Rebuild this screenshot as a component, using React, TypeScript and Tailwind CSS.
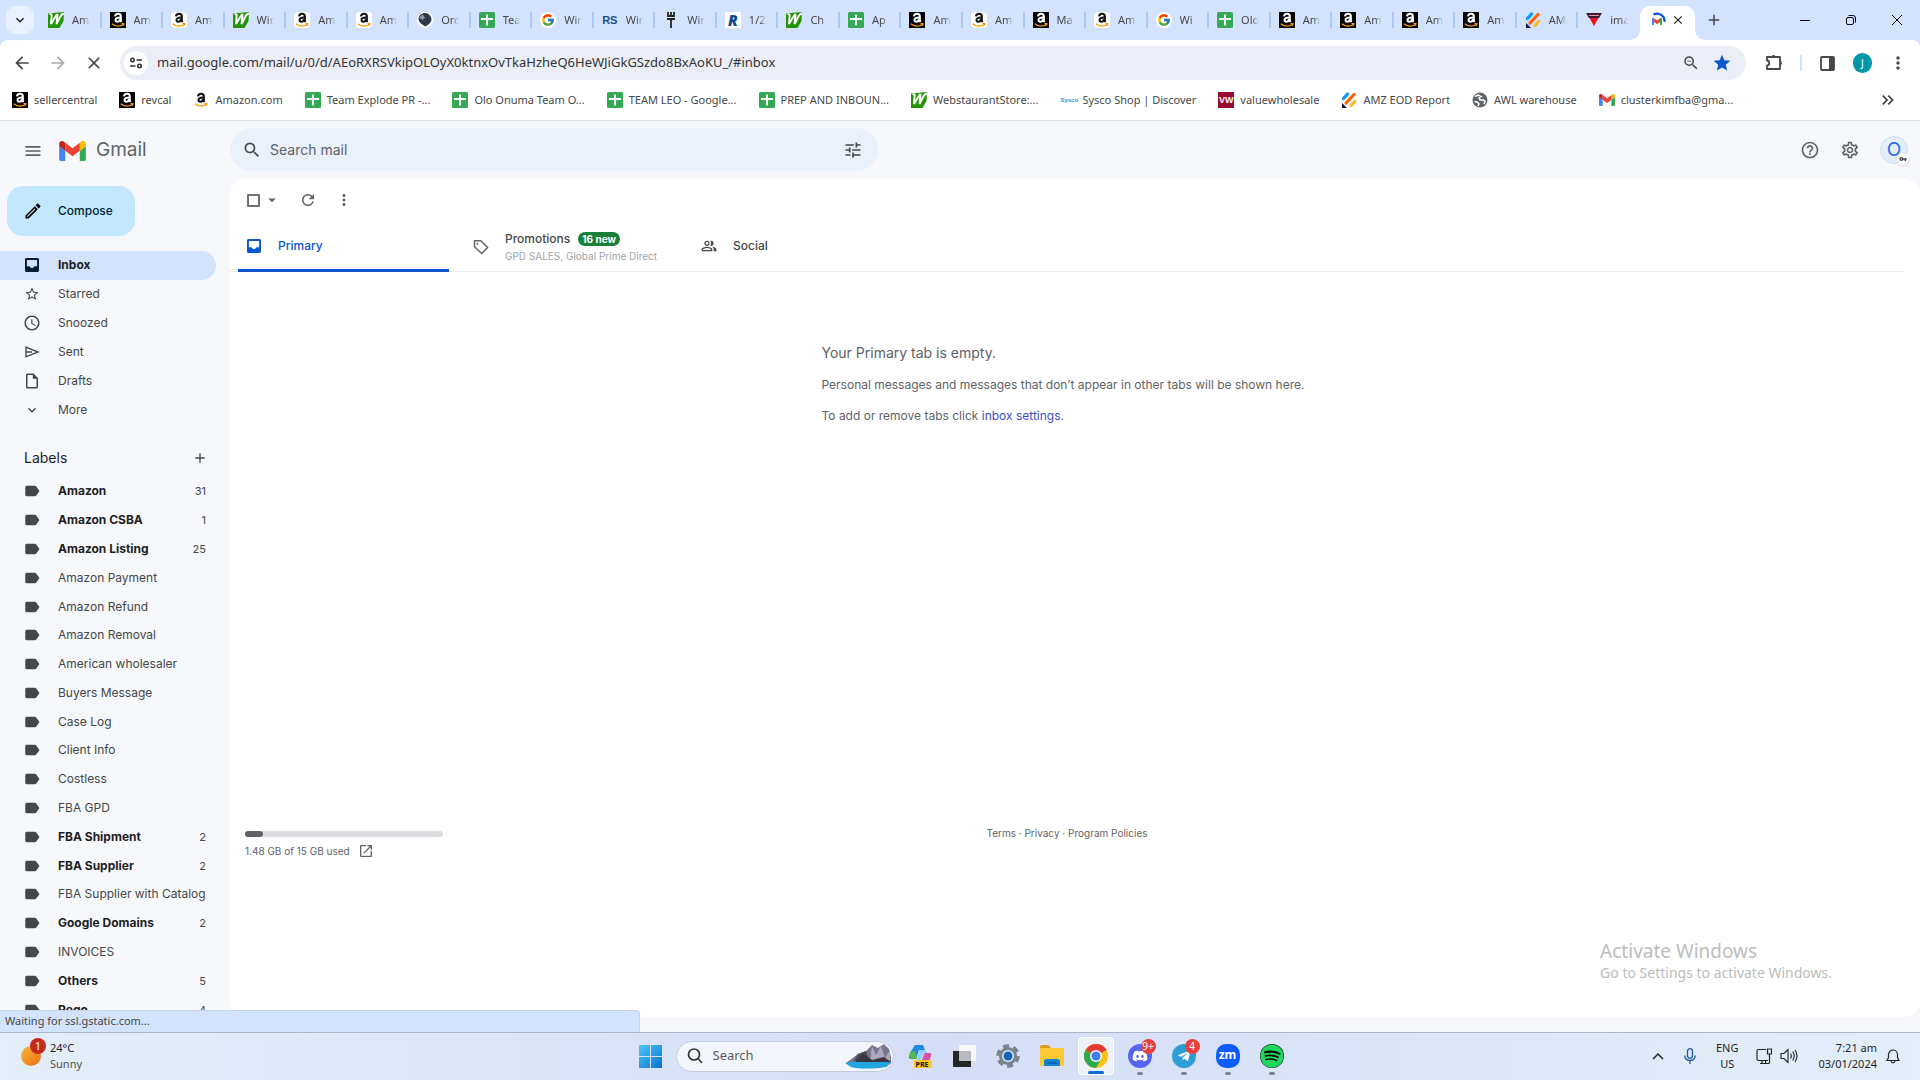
import { ReactNode } from 'react'
import {
  MdAccessTime,
  MdAdd,
  MdArrowBack,
  MdArrowDropDown,
  MdArrowForward,
  MdClose,
  MdExpandMore,
  MdHelpOutline,
  MdKeyboardDoubleArrowRight,
  MdLabel,
  MdMenu,
  MdMoreVert,
  MdOpenInNew,
  MdOutlineInsertDriveFile,
  MdOutlineModeEdit,
  MdOutlinePeopleAlt,
  MdOutlineSettings,
  MdRefresh,
  MdSearch,
  MdStar,
  MdStarOutline,
  MdTune,
  MdVpnKey,
  MdZoomOut,
} from 'react-icons/md'
import { FaDiscord, FaSpotify, FaTelegramPlane } from 'react-icons/fa'
import { FcGoogle } from 'react-icons/fc'

type IconName =
  | 'webstaurant'
  | 'amazonDark'
  | 'amazonLight'
  | 'amazonPlain'
  | 'globe'
  | 'darkGlobe'
  | 'sheets'
  | 'google'
  | 'rs'
  | 'fork'
  | 'r'
  | 'sysco'
  | 'vw'
  | 'jot'
  | 'triangle'
  | 'gmail'

function AmazonMark({ color }: { color: string }) {
  return (
    <svg viewBox="0 0 16 16" className="size-4">
      <path
        d="M5 4.400C5.200 2.600 6.500 1.800 8.100 1.800c1.800 0 2.700.9 2.700 2.500v4c0 .8.300 1.200.8 1.700"
        fill="none"
        stroke={color}
        strokeWidth="2.100"
      />
      <path
        d="M10 5.500C7 5.500 5.500 6.300 5.500 8c0 1.100.7 1.700 1.800 1.700 1.600 0 2.700-1 2.700-2.600"
        fill="none"
        stroke={color}
        strokeWidth="2"
      />
      <path
        d="M1.800 11.800c3.400 2.700 8.200 2.900 11.700.7M11.500 11.600l2.300.1-.4 2"
        fill="none"
        stroke="#f90"
        strokeWidth="1.400"
      />
    </svg>
  )
}

function GmailMark({ className }: { className: string }) {
  return (
    <svg viewBox="52 42 88 66" className={className}>
      <path fill="#4285f4" d="M58 108h14V74L52 59v43c0 3.320 2.690 6 6 6" />
      <path fill="#34a853" d="M120 108h14c3.320 0 6-2.690 6-6V59l-20 15" />
      <path fill="#fbbc04" d="M120 48v26l20-15v-8c0-7.420-8.470-11.650-14.400-7.200" />
      <path fill="#ea4335" d="M72 74V48l24 18 24-18v26L96 92" />
      <path fill="#c5221f" d="M52 51v8l20 15V48l-5.600-4.200c-5.940-4.450-14.400-.22-14.400 7.200" />
    </svg>
  )
}

function InboxIcon({ className }: { className: string }) {
  return (
    <svg viewBox="0 0 16 16" className={className}>
      <path
        d="M2.500 1h11c.8 0 1.500.7 1.500 1.500v11c0 .8-.7 1.500-1.500 1.500h-11C1.700 15 1 14.300 1 13.500v-11C1 1.700 1.700 1 2.500 1zm.4 1.900v6.400h2.800c.3 1.100 1.200 1.800 2.300 1.800s2-.7 2.300-1.800h2.800V2.900z"
        fill="currentColor"
        fillRule="evenodd"
      />
    </svg>
  )
}

function SiteIcon({ name }: { name: IconName }) {
  switch (name) {
    case 'webstaurant':
      return (
        <svg viewBox="0 0 16 16" className="size-4 shrink-0">
          <path d="M0 1.500L16 0l-.5 9-4 7H0z" fill="#249406" />
          <path
            d="M1.500 2.500c2-1 2.500 0 2 3L3 12l5.500-9c.6-1 1.200-.6 1 .5L8.500 12 13 3.500c.6-1.200 1.500-1.500 3-2"
            fill="none"
            stroke="#fff"
            strokeWidth="1.900"
          />
        </svg>
      )
    case 'amazonDark':
      return (
        <span className="size-4 shrink-0 bg-black">
          <AmazonMark color="#fff" />
        </span>
      )
    case 'amazonLight':
      return (
        <span className="size-4 shrink-0 rounded-sm bg-white">
          <AmazonMark color="#111" />
        </span>
      )
    case 'amazonPlain':
      return (
        <span className="size-4 shrink-0">
          <AmazonMark color="#111" />
        </span>
      )
    case 'sheets':
      return (
        <svg viewBox="0 0 16 16" className="size-4 shrink-0">
          <rect width="16" height="16" rx="1.500" fill="#34a853" />
          <path d="M7 2.500h2V6h5v2H9v5.500H7V8H2V6h5z" fill="#fff" />
        </svg>
      )
    case 'google':
      return (
        <span className="size-4 shrink-0 rounded-full bg-white p-px">
          <FcGoogle className="size-3.5" />
        </span>
      )
    case 'darkGlobe':
      return (
        <svg viewBox="0 0 16 16" className="size-4 shrink-0">
          <circle cx="8" cy="8" r="8" fill="#fff" />
          <path
            d="M8 1a6.500 6.500 0 0 1 6.500 6.500c0 3-3 5-6 7-2.500-1.500-7-4-7-7.500C1.500 3.500 4.500 1 8 1z"
            fill="#2b3a45"
          />
          <path
            d="M2 6c1-2 2.500-3 4.500-3.500C6 4 7 5 8.500 5.500 7 6 6 7 6 8.500 5 7 3.500 6.500 2 6z"
            fill="#8f9ca5"
          />
        </svg>
      )
    case 'globe':
      return (
        <svg viewBox="0 0 16 16" className="size-4 shrink-0">
          <circle cx="8" cy="8" r="7.500" fill="#5f6368" />
          <path
            d="M3 4.500L6 3l3 1.500-2 1 1 2.500h3.500l1.500 1.500-1 2.500M2.500 9.500l2.500.5 2 2-1 2"
            fill="none"
            stroke="#fff"
            strokeWidth="1.500"
          />
        </svg>
      )
    case 'rs':
      return (
        <span className="w-4 shrink-0 font-['Liberation_Sans'] text-[11px]/4 font-bold text-[#1c4f8c]">
          RS
        </span>
      )
    case 'fork':
      return (
        <svg viewBox="0 0 16 16" className="size-4 shrink-0">
          <path
            d="M5 0v4h6V0M8 0v4M4 7h8M8 7v9"
            fill="none"
            stroke="#222"
            strokeWidth="1.800"
          />
        </svg>
      )
    case 'r':
      return (
        <span className="size-4 shrink-0 bg-white text-center text-[15px]/4 font-black text-[#0b4a8f] italic">
          R
        </span>
      )
    case 'sysco':
      return (
        <span className="w-4 shrink-0 font-['Liberation_Sans'] text-[6px]/4 font-black text-[#1c95d4]">
          Sysco
        </span>
      )
    case 'vw':
      return (
        <span className="size-4 shrink-0 bg-[#9b0a32] text-center font-['Liberation_Sans'] text-[9px]/4 font-bold text-white">
          VW
        </span>
      )
    case 'jot':
      return (
        <svg viewBox="0 0 16 16" className="size-4 shrink-0">
          <g strokeWidth="3.200" strokeLinecap="round">
            <path d="M2.500 6.500l4-4.500" stroke="#0a99ff" />
            <path d="M5 11l8-8.500" stroke="#ff6100" />
            <path d="M10 13.500l3.800-4" stroke="#ffb629" />
          </g>
          <path d="M1 11v5h5z" fill="#0a1551" />
        </svg>
      )
    case 'triangle':
      return (
        <svg viewBox="0 0 16 16" className="size-4 shrink-0">
          <path d="M0 1h16l-3 5H3z" fill="#3c1a3c" />
          <path d="M3.500 6h9L8 14z" fill="#f0141e" />
          <path d="M3 3.500h10" stroke="#e09aa0" />
        </svg>
      )
    case 'gmail':
      return <GmailMark className="h-3 w-4 shrink-0" />
  }
}

const tabs: { icon: IconName; title: string }[] = [
  { icon: 'webstaurant', title: 'Am' },
  { icon: 'amazonDark', title: 'Am' },
  { icon: 'amazonLight', title: 'Am' },
  { icon: 'webstaurant', title: 'Win' },
  { icon: 'amazonLight', title: 'Am' },
  { icon: 'amazonLight', title: 'Am' },
  { icon: 'darkGlobe', title: 'Ord' },
  { icon: 'sheets', title: 'Tea' },
  { icon: 'google', title: 'Win' },
  { icon: 'rs', title: 'Win' },
  { icon: 'fork', title: 'Win' },
  { icon: 'r', title: '1/2' },
  { icon: 'webstaurant', title: 'Ch' },
  { icon: 'sheets', title: 'Ap' },
  { icon: 'amazonDark', title: 'Am' },
  { icon: 'amazonLight', title: 'Am' },
  { icon: 'amazonDark', title: 'Ma' },
  { icon: 'amazonLight', title: 'Am' },
  { icon: 'google', title: 'Wi' },
  { icon: 'sheets', title: 'Olo' },
  { icon: 'amazonDark', title: 'Am' },
  { icon: 'amazonDark', title: 'Am' },
  { icon: 'amazonDark', title: 'Am' },
  { icon: 'amazonDark', title: 'Am' },
  { icon: 'jot', title: 'AM' },
  { icon: 'triangle', title: 'ima' },
]

const bookmarks: { icon: IconName; title: string }[] = [
  { icon: 'amazonDark', title: 'sellercentral' },
  { icon: 'amazonDark', title: 'revcal' },
  { icon: 'amazonPlain', title: 'Amazon.com' },
  { icon: 'sheets', title: 'Team Explode PR -...' },
  { icon: 'sheets', title: 'Olo Onuma Team O...' },
  { icon: 'sheets', title: 'TEAM LEO - Google...' },
  { icon: 'sheets', title: 'PREP AND INBOUN...' },
  { icon: 'webstaurant', title: 'WebstaurantStore:...' },
  { icon: 'sysco', title: 'Sysco Shop | Discover' },
  { icon: 'vw', title: 'valuewholesale' },
  { icon: 'jot', title: 'AMZ EOD Report' },
  { icon: 'globe', title: 'AWL warehouse' },
  { icon: 'gmail', title: 'clusterkimfba@gma...' },
]

const labels: { name: string; count?: number }[] = [
  { name: 'Amazon', count: 31 },
  { name: 'Amazon CSBA', count: 1 },
  { name: 'Amazon Listing', count: 25 },
  { name: 'Amazon Payment' },
  { name: 'Amazon Refund' },
  { name: 'Amazon Removal' },
  { name: 'American wholesaler' },
  { name: 'Buyers Message' },
  { name: 'Case Log' },
  { name: 'Client Info' },
  { name: 'Costless' },
  { name: 'FBA GPD' },
  { name: 'FBA Shipment', count: 2 },
  { name: 'FBA Supplier', count: 2 },
  { name: 'FBA Supplier with Catalog' },
  { name: 'Google Domains', count: 2 },
  { name: 'INVOICES' },
  { name: 'Others', count: 5 },
  { name: 'Rego', count: 4 },
]

function TabStrip() {
  return (
    <div className="flex h-10 bg-[#d3e3fd]">
      <div className="w-10 shrink-0 pt-1.5 pl-1.5">
        <button
          aria-label="Search tabs"
          className="flex size-7 items-center justify-center rounded-[10px] bg-[#e9f1fe]"
        >
          <MdExpandMore className="size-4 text-[#1f1f1f]" />
        </button>
      </div>
      <div className="flex min-w-0 flex-1">
        {tabs.map((tab, i) => (
          <button key={i} className="flex min-w-0 flex-1 items-center pl-2">
            <SiteIcon name={tab.icon} />
            <span className="ml-2 min-w-0 flex-1 overflow-hidden mask-r-from-60% text-left text-[11px]/4 whitespace-nowrap text-[#474747]">
              {tab.title}
            </span>
            <span
              className={
                i === tabs.length - 1
                  ? 'ml-2.5 w-0.5 shrink-0'
                  : 'ml-2.5 h-4 w-0.5 shrink-0 bg-[#a8c7fa]'
              }
            />
          </button>
        ))}
      </div>
      <div className="relative mt-1.5 flex w-[55px] shrink-0 items-center justify-between rounded-t-[10px] bg-white px-2.5 pb-1.5">
        <svg
          viewBox="0 0 10 10"
          className="absolute bottom-0 -left-2.5 size-2.5"
        >
          <path d="M10 0v10H0A10 10 0 0 0 10 0z" fill="#fff" />
        </svg>
        <svg
          viewBox="0 0 10 10"
          className="absolute -right-2.5 bottom-0 size-2.5"
        >
          <path d="M0 0v10h10A10 10 0 0 1 0 0z" fill="#fff" />
        </svg>
        <svg viewBox="0 0 16 16" className="size-4">
          <path
            d="M3 6l4 3 4-3v3L7 11.500 3 9z"
            fill="#ea4335"
            stroke="#ea4335"
          />
          <path d="M3 6.500V13" stroke="#4285f4" strokeWidth="2" />
          <path d="M11 6.500V13" stroke="#34a853" strokeWidth="2" />
          <path
            d="M3.500 2.500A7.500 7.500 0 0 1 14.500 10"
            fill="none"
            stroke="#0b57d0"
            strokeWidth="2.200"
          />
        </svg>
        <button aria-label="Close tab">
          <MdClose className="size-3.5 text-[#1f1f1f]" />
        </button>
      </div>
      <div className="flex w-[225px] shrink-0 items-center justify-between pr-[18px] pl-2.5">
        <button aria-label="New tab">
          <MdAdd className="size-[18px] text-[#474747]" />
        </button>
        <div className="flex items-center gap-9">
          <button aria-label="Minimize">
            <svg viewBox="0 0 10 10" className="size-2.5">
              <path d="M0 5.500h10" stroke="#000" />
            </svg>
          </button>
          <button aria-label="Restore">
            <svg viewBox="0 0 10 10" className="size-2.5">
              <g fill="none" stroke="#000">
                <rect x=".5" y="2.500" width="7" height="7" rx="1.500" />
                <path d="M2.500.5H7A2.500 2.500 0 0 1 9.500 3v4.500" />
              </g>
            </svg>
          </button>
          <button aria-label="Close">
            <svg viewBox="0 0 10 10" className="size-2.5">
              <path d="M0 0l10 10M10 0L0 10" stroke="#000" />
            </svg>
          </button>
        </div>
      </div>
    </div>
  )
}

function AddressBar() {
  return (
    <div className="flex h-[46px] items-center rounded-t-lg bg-white pr-3 pl-3">
      <div className="flex w-[108px] shrink-0 items-center gap-4">
        <button aria-label="Back">
          <MdArrowBack className="size-5 text-[#474747]" />
        </button>
        <button aria-label="Forward">
          <MdArrowForward className="size-5 text-[#ababab]" />
        </button>
        <button aria-label="Stop loading">
          <MdClose className="size-5 text-[#474747]" />
        </button>
      </div>
      <div className="flex h-[34px] min-w-0 flex-1 items-center rounded-full bg-[#ebeef7] pr-3.5 pl-1">
        <button
          aria-label="Site information"
          className="flex size-6 shrink-0 items-center justify-center rounded-full bg-white"
        >
          <svg viewBox="0 0 14 14" className="size-3.5">
            <g fill="none" stroke="#333" strokeWidth="1.600">
              <circle cx="3.500" cy="4" r="1.700" />
              <circle cx="10.500" cy="10" r="1.700" />
              <path d="M7.500 4H13M1 10h5.500" />
            </g>
          </svg>
        </button>
        <input
          aria-label="Address"
          readOnly
          value="mail.google.com/mail/u/0/d/AEoRXRSVkipOLOyX0ktnxOvTkaHzheQ6HeWJiGkGSzdo8BxAoKU_/#inbox"
          className="min-w-0 flex-1 bg-transparent pl-[9px] text-[13px] text-[#333] outline-none"
        />
        <div className="flex items-center gap-3">
          <MdZoomOut className="size-[18px] text-[#474747]" />
          <MdStar className="size-5 text-[#0b57d0]" />
        </div>
      </div>
      <div className="flex w-[162px] shrink-0 items-center pl-4">
        <button aria-label="Extensions" className="ml-0.5">
          <svg viewBox="0 0 20 20" className="size-5">
            <path
              d="M3 4h13v12H3v-3.500c3 0 3-5 0-5z"
              fill="none"
              stroke="#474747"
              strokeWidth="1.800"
              strokeLinejoin="round"
            />
            <path
              d="M7.500 4a2 2 0 0 1 4 0zM16 8a2 2 0 0 1 0 4z"
              fill="#474747"
            />
          </svg>
        </button>
        <span className="ml-4 h-4 w-0.5 bg-[#d3e3fd]" />
        <button aria-label="Side panel" className="ml-[18px]">
          <svg viewBox="0 0 15 15" className="size-[15px]">
            <rect
              x="1"
              y="1"
              width="13"
              height="13"
              rx="1"
              fill="none"
              stroke="#474747"
              strokeWidth="1.800"
            />
            <path d="M9 1h5v13H9z" fill="#474747" />
          </svg>
        </button>
        <button className="ml-[18px] size-5 rounded-full bg-[#0097a7] text-[10px]/5 text-white">
          J
        </button>
        <button aria-label="Chrome menu" className="ml-4">
          <MdMoreVert className="size-5 text-[#474747]" />
        </button>
      </div>
    </div>
  )
}

function BookmarksBar() {
  return (
    <div className="flex h-[35px] items-start justify-between border-b border-[#dfe1e5] bg-white pt-1 pr-[22px] pl-3">
      <nav aria-label="Bookmarks" className="flex gap-[22px]">
        {bookmarks.map((mark) => (
          <a
            key={mark.title}
            href="#"
            className="flex h-5 items-center gap-1.5 text-[11px]/5 whitespace-nowrap text-[#474747]"
          >
            <SiteIcon name={mark.icon} />
            {mark.title}
          </a>
        ))}
      </nav>
      <button aria-label="More bookmarks">
        <MdKeyboardDoubleArrowRight className="size-5 text-[#474747]" />
      </button>
    </div>
  )
}

function NavItem({
  icon,
  name,
  count,
  active,
}: {
  icon: ReactNode
  name: string
  count?: number
  active?: boolean
}) {
  return (
    <li
      className={
        active
          ? 'flex min-w-0 rounded-r-full bg-[#d3e3fd] text-[#001d35]'
          : 'flex min-w-0 text-[#444746]'
      }
    >
      <a
        href="#"
        className="flex min-w-0 flex-1 items-center pr-2.5 pl-[23px] text-[12px]/5 whitespace-nowrap"
      >
        <span className="mr-[17px] flex w-[18px] shrink-0 justify-center">
          {icon}
        </span>
        <span
          className={
            active || count ? 'flex-1 font-bold text-[#1f1f1f]' : 'flex-1'
          }
        >
          {name}
        </span>
        {count && <span className="text-[11px]">{count}</span>}
      </a>
    </li>
  )
}

function Sidebar() {
  return (
    <aside className="w-[230px] shrink-0 overflow-hidden">
      <button className="mt-[7px] ml-[7px] flex h-[50px] w-32 items-center rounded-2xl bg-[#c2e7ff] pl-4 text-[12px] font-medium text-[#001d35]">
        <MdOutlineModeEdit className="mr-[15px] size-5 text-black" />
        Compose
      </button>
      <ul className="mt-[15px] mr-3.5 grid h-[173px] auto-rows-fr">
        <NavItem
          active
          name="Inbox"
          icon={<InboxIcon className="size-4 text-[#001d35]" />}
        />
        <NavItem name="Starred" icon={<MdStarOutline className="size-4" />} />
        <NavItem
          name="Snoozed"
          icon={<MdAccessTime className="size-[18px]" />}
        />
        <NavItem
          name="Sent"
          icon={
            <svg viewBox="0 0 16 16" className="size-4">
              <path
                d="M2 3.200L14 8 2 12.800V8zM2 8h6"
                fill="none"
                stroke="#444746"
                strokeWidth="1.400"
              />
            </svg>
          }
        />
        <NavItem
          name="Drafts"
          icon={<MdOutlineInsertDriveFile className="size-[18px]" />}
        />
        <NavItem name="More" icon={<MdExpandMore className="size-4" />} />
      </ul>
      <div className="mt-3.5 flex h-[39px] items-center justify-between pr-[22px] pl-6">
        <h3 className="text-[14px] text-[#1f1f1f]">Labels</h3>
        <button aria-label="Create new label">
          <MdAdd className="size-4 text-[#444746]" />
        </button>
      </div>
      <ul className="mr-3.5 grid h-[547px] auto-rows-fr grid-cols-1">
        {labels.map((label) => (
          <NavItem
            key={label.name}
            name={label.name}
            count={label.count}
            icon={<MdLabel className="size-[18px] text-[#444746]" />}
          />
        ))}
      </ul>
    </aside>
  )
}

function GmailHeader() {
  return (
    <header className="flex h-[58px] shrink-0 items-center pb-px">
      <div className="flex w-[230px] shrink-0 items-center pt-0.5 pl-[23px]">
        <button aria-label="Main menu">
          <MdMenu className="size-5 text-[#5f6368]" />
        </button>
        <a
          href="#"
          className="ml-4 flex items-center gap-2.5 text-[19px] text-[#5f6368]"
        >
          <GmailMark className="h-5 w-[27px]" />
          Gmail
        </a>
      </div>
      <label className="flex h-[43px] w-[648px] items-center rounded-full bg-[#eaf1fb] pr-[15px] pl-3">
        <MdSearch className="size-5 shrink-0 text-[#444746]" />
        <input
          type="search"
          aria-label="Search mail"
          placeholder="Search mail"
          className="flex-1 bg-transparent pl-2 text-[14px] outline-none placeholder:text-[#5f6368]"
        />
        <MdTune className="size-5 shrink-0 text-[#444746]" />
      </label>
      <div className="flex flex-1 items-center justify-end gap-5 pr-3">
        <button aria-label="Support">
          <MdHelpOutline className="size-5 text-[#5f6368]" />
        </button>
        <button aria-label="Settings">
          <MdOutlineSettings className="size-5 text-[#5f6368]" />
        </button>
        <button
          aria-label="Google account"
          className="relative flex size-7 items-center justify-center rounded-full border border-[#d5e0f0] bg-[#e4edfa] text-[19px]/6 text-[#2a6cf0]"
        >
          O
          <span className="absolute -right-0.5 -bottom-0.5 flex size-3 items-center justify-center rounded-full bg-white shadow-sm">
            <MdVpnKey className="size-2 text-[#444]" />
          </span>
        </button>
      </div>
    </header>
  )
}

function InboxPanel() {
  return (
    <main className="flex min-w-0 flex-1 flex-col rounded-2xl bg-white">
      <div className="flex h-[42px] items-center pl-[17px] text-[#5f6368]">
        <input
          type="checkbox"
          aria-label="Select all"
          className="size-[13px] appearance-none rounded-[1px] border-2 border-[#6f7377]"
        />
        <button aria-label="Select" className="ml-[3px]">
          <MdArrowDropDown className="size-[18px]" />
        </button>
        <button aria-label="Refresh" className="ml-[18px]">
          <MdRefresh className="size-[18px]" />
        </button>
        <button aria-label="More" className="ml-[18px]">
          <MdMoreVert className="size-[18px]" />
        </button>
      </div>
      <div
        role="tablist"
        className="mr-4 flex h-[51px] border-b border-[#eceff1] pl-2 text-[12px]/5 text-[#444746]"
      >
        <button
          role="tab"
          aria-selected
          className="mr-[17px] -mb-px flex w-[211px] items-center rounded-t-sm border-b-[3px] border-[#0b57d0] pt-0.5 pl-2 font-medium text-[#0b57d0]"
        >
          <InboxIcon className="mr-4 size-4" />
          Primary
        </button>
        <button
          role="tab"
          aria-selected={false}
          className="flex w-[228px] items-center pt-0.5 pl-[7px] text-left"
        >
          <svg viewBox="0 0 16 16" className="mr-4 size-4 shrink-0">
            <path
              d="M1.500 1.700h6.300L14.600 8.500 8.600 14.500 1.500 7.800z"
              fill="none"
              stroke="#5f6368"
              strokeWidth="1.500"
              strokeLinejoin="round"
            />
            <circle cx="4.500" cy="4.700" r="1" fill="#5f6368" />
          </svg>
          <span className="whitespace-nowrap">
            <span className="flex h-[18px] items-center gap-2 font-medium">
              Promotions
              <span className="rounded-full bg-[#188038] px-1 text-[10px]/3.5 font-bold text-white">
                16 new
              </span>
            </span>
            <span className="block text-[10px]/4 text-[#a0a4a8]">
              GPD SALES, Global Prime Direct
            </span>
          </span>
        </button>
        <button
          role="tab"
          aria-selected={false}
          className="flex w-[228px] items-center pl-[7px] font-medium"
        >
          <MdOutlinePeopleAlt className="mr-4 size-4" />
          Social
        </button>
      </div>
      <div className="mt-[71px] ml-[35%] text-[12px]/5 text-[#5f6368]">
        <p className="mb-3 text-[14px]/5">Your Primary tab is empty.</p>
        <p className="mb-[11px]">
          Personal messages and messages that don’t appear in other tabs will be
          shown here.
        </p>
        <p>
          To add or remove tabs click{' '}
          <a href="#" className="text-[#3c50c8]">
            inbox settings
          </a>
          .
        </p>
      </div>
      <footer className="mt-[399px] grid grid-cols-[1fr_auto_1fr] pr-[31px] pl-[15px] text-[10px]/4 text-[#5f6368]">
        <div className="pt-[6px]">
          <div className="h-1.5 w-[198px] rounded-full bg-[#dadce0]">
            <div className="h-1.5 w-[18px] rounded-full bg-[#5f6368]" />
          </div>
          <p className="mt-1.5 flex items-center gap-2">
            1.48 GB of 15 GB used
            <a href="#" aria-label="Manage storage">
              <MdOpenInNew className="size-4" />
            </a>
          </p>
        </div>
        <p>
          <a href="#">Terms</a> · <a href="#">Privacy</a> ·{' '}
          <a href="#">Program Policies</a>
        </p>
      </footer>
    </main>
  )
}

function TaskApp({
  name,
  badge,
  open,
  active,
  children,
}: {
  name: string
  badge?: string
  open?: boolean
  active?: boolean
  children: ReactNode
}) {
  return (
    <button
      aria-label={name}
      className={
        active
          ? 'relative flex h-[38px] w-9 items-center justify-center rounded border border-white bg-[#eef2fb]'
          : 'relative flex h-[38px] w-9 items-center justify-center'
      }
    >
      {children}
      {badge && (
        <span className="absolute top-0.5 right-0.5 min-w-[15px] rounded-full bg-[#e8413c] text-[10px]/[15px] text-white">
          {badge}
        </span>
      )}
      {active && (
        <span className="absolute bottom-0 h-[3px] w-4 rounded-full bg-[#0f6fd0]" />
      )}
      {open && (
        <span className="absolute bottom-0 h-[3px] w-1.5 rounded-full bg-[#7d828c]" />
      )}
    </button>
  )
}

function Taskbar() {
  return (
    <footer className="grid h-12 shrink-0 grid-cols-[1fr_auto_1fr] items-center border-t border-[#b0b6c4] bg-linear-to-r from-[#e3eef9] via-[#d5def5] to-[#e3eef9] pb-px">
      <button className="flex items-center gap-1.5 pl-5 text-left text-[11px]/4 text-[#222]">
        <span className="relative size-6">
          <svg viewBox="0 0 24 24" className="size-6">
            <linearGradient id="sun" x1="0" y1="0" x2="1" y2="1">
              <stop offset="0" stopColor="#f2b93b" />
              <stop offset="1" stopColor="#f06c12" />
            </linearGradient>
            <circle cx="11" cy="12" r="10" fill="url(#sun)" />
          </svg>
          <span className="absolute -top-1.5 -right-0.5 size-4 rounded-full bg-[#c42b1c] text-center text-[11px]/4 text-white">
            1
          </span>
        </span>
        <span>
          24°C
          <br />
          <span className="text-[#555]">Sunny</span>
        </span>
      </button>
      <div className="flex items-center pl-2">
        <button aria-label="Start" className="mr-3.5">
          <svg viewBox="0 0 23 23" className="size-[23px]">
            <linearGradient id="win" x1="0" y1="0" x2="1" y2="1">
              <stop offset="0" stopColor="#4cc9f5" />
              <stop offset="1" stopColor="#0b70cf" />
            </linearGradient>
            <path
              d="M0 0h11v11H0zM12 0h11v11H12zM0 12h11v11H0zM12 12h11v11H12z"
              fill="url(#win)"
            />
          </svg>
        </button>
        <label className="mr-2 flex h-[31px] w-[218px] items-center rounded-full border border-[#c5cce0] bg-[#f3f6fd] pr-px pl-2.5">
          <svg viewBox="0 0 16 16" className="size-4 shrink-0">
            <g fill="none" stroke="#333" strokeWidth="1.700">
              <circle cx="7" cy="6.500" r="5.500" />
              <path d="M11 10.500l4 4.500" />
            </g>
          </svg>
          <input
            aria-label="Search"
            placeholder="Search"
            className="min-w-0 flex-1 bg-transparent pl-2.5 text-[13px] outline-none placeholder:text-[#5a5a5a]"
          />
          <svg viewBox="0 0 48 26" className="h-[26px] w-12 shrink-0">
            <path d="M2 20L14 11l8-3 6-6 6 3 6-4 5 5 2 8v6l-5 4H10z" fill="#77768c" />
            <path d="M14 11l8-3 2 6-6 6-9-1z" fill="#4a4755" />
            <path d="M28 3l4 9 5-9 4 12 5-8v12H26z" fill="#aaa8bf" />
            <path d="M1 20c12-3 32-3 46-2l-5 6c-12 2-28 2-35 0z" fill="#22a6e0" />
            <path d="M12 17l8-6 8 6 12-3 7 5H12z" fill="#3b3540" />
          </svg>
        </label>
        <div className="flex gap-2">
          <TaskApp name="Copilot">
            <svg viewBox="0 0 24 24" className="size-6">
              <path d="M7 1h8l2 5h-6L8 15H3c-3 0-2-3-1-6z" fill="#1e88e5" />
              <path d="M2 8l5-1 2 8H4c-2 0-3-1-2-7z" fill="#52b84a" />
              <path d="M17 9h5c2 0 1 3 0 6l-3 7h-7l4-12z" fill="#d64fa8" />
              <path d="M11 6h5c2 0 2 1 3 3h-4l-3 9H9z" fill="#8fd0ff" />
              <rect x="6" y="16" width="18" height="8" rx="1" fill="#fdc828" />
              <text x="7.500" y="22.600" fontSize="7" fontWeight="800" fill="#222">
                PRE
              </text>
            </svg>
          </TaskApp>
          <TaskApp name="Task view">
            <svg viewBox="0 0 24 24" className="size-6">
              <path d="M1 7h18v16H1z" fill="#262626" />
              <path d="M7 1h17v16H7z" fill="#f8f8f8" />
              <path d="M7 7h12v10H7z" fill="#b9bbc0" />
            </svg>
          </TaskApp>
          <TaskApp name="Settings">
            <svg viewBox="0 0 24 24" className="size-6">
              <circle
                cx="12"
                cy="12"
                r="10"
                fill="none"
                stroke="#77838e"
                strokeWidth="3.500"
                strokeDasharray="6 4.470"
              />
              <circle cx="12" cy="12" r="9" fill="#77838e" />
              <circle cx="12" cy="12" r="6" fill="#e5ebf2" />
              <circle cx="12" cy="12" r="4.500" fill="#1565b5" />
            </svg>
          </TaskApp>
          <TaskApp name="File Explorer">
            <svg viewBox="0 0 24 24" className="size-6">
              <path d="M0 3c0-1 .5-2 2-2h6l3 3v5H0z" fill="#e09b13" />
              <rect y="4" width="24" height="18" rx="1.500" fill="#fcc934" />
              <path d="M4 22v-5c0-1 1-2 2-2h12c1 0 2 1 2 2v5z" fill="#1583d3" />
              <path d="M7 19h10" stroke="#0b5ca8" strokeWidth="1.500" />
            </svg>
          </TaskApp>
          <TaskApp name="Google Chrome" active>
            <svg viewBox="0 0 24 24" className="size-6">
              <circle cx="12" cy="12" r="12" fill="#fbc116" />
              <path d="M12 12L1.600 6A12 12 0 0 1 22.400 6z" fill="#e33b2e" />
              <path d="M12 0a12 12 0 0 1 10.400 6H12z" fill="#e33b2e" />
              <path d="M1.600 6A12 12 0 0 0 12 24l5.200-9L12 12z" fill="#2da94f" />
              <circle cx="12" cy="12" r="6" fill="#fff" />
              <circle cx="12" cy="12" r="4.600" fill="#3f7de8" />
            </svg>
          </TaskApp>
          <TaskApp name="Discord" badge="9+" open>
            <span className="flex size-6 items-center justify-center rounded-full bg-[#5865f2]">
              <FaDiscord className="size-4 text-white" />
            </span>
          </TaskApp>
          <TaskApp name="Telegram" badge="4" open>
            <span className="flex size-6 items-center justify-center rounded-full bg-[#2a9fd8]">
              <FaTelegramPlane className="size-3.5 text-white" />
            </span>
          </TaskApp>
          <TaskApp name="Zoom" open>
            <span className="size-6 rounded-[10px] bg-[#0b5cff] text-center text-[12px]/[22px] font-bold text-white">
              zm
            </span>
          </TaskApp>
          <TaskApp name="Spotify" open>
            <FaSpotify className="size-6 rounded-full bg-black text-[#1ed760]" />
          </TaskApp>
        </div>
      </div>
      <div className="flex items-center justify-end pr-5 text-[11px]/4 text-[#1f1f1f]">
        <button aria-label="Show hidden icons">
          <svg viewBox="0 0 12 12" className="size-3">
            <path d="M1 9l5-5 5 5" fill="none" stroke="#222" strokeWidth="1.500" />
          </svg>
        </button>
        <svg viewBox="0 0 12 16" className="ml-5 h-4 w-3">
          <g fill="none" stroke="#1d56a8" strokeWidth="1.300">
            <rect x="3.500" y=".7" width="5" height="9.500" rx="2.500" />
            <path d="M.8 7.500c0 3.500 2 5 5.200 5s5.200-1.500 5.200-5M6 12.500V16" />
          </g>
        </svg>
        <button className="ml-5 text-center">
          ENG
          <br />
          US
        </button>
        <svg viewBox="0 0 16 16" className="ml-[18px] size-4">
          <path
            d="M10 1.500H2.500c-1 0-1.500.5-1.500 1.500v8c0 1 .5 1.500 1.500 1.500H12M4 15.500h9M6 12.500v3M9.500 12.500v3M13.500 6.500v9M11.500 1h4v5h-4z"
            fill="none"
            stroke="#222"
            strokeWidth="1.200"
          />
        </svg>
        <svg viewBox="0 0 18 16" className="ml-2 h-4 w-[18px]">
          <path
            d="M1 5.500h3l4-4v13l-4-4H1zM10.500 5.500c1 1.500 1 3.500 0 5M12.700 3.500c2 3 2 6 0 9M15 2c2.600 4 2.600 8 0 12"
            fill="none"
            stroke="#222"
            strokeWidth="1.100"
          />
        </svg>
        <button className="ml-5 text-right">
          7:21 am
          <br />
          03/01/2024
        </button>
        <button aria-label="Notifications" className="ml-[9px]">
          <svg viewBox="0 0 14 16" className="h-4 w-3.5">
            <path
              d="M1 12.500l1.500-3V6.500a4.500 4.500 0 0 1 9 0v3l1.500 3zM5 13c.5 2.500 3.500 2.500 4 0"
              fill="none"
              stroke="#222"
              strokeWidth="1.200"
            />
          </svg>
        </button>
      </div>
    </footer>
  )
}

function App() {
  return (
    <div className="flex h-screen flex-col overflow-hidden font-['Noto_Sans','Open_Sans',sans-serif]">
      <div className="shrink-0 bg-[#d3e3fd]">
        <TabStrip />
        <AddressBar />
        <BookmarksBar />
      </div>
      <div className="relative flex min-h-0 flex-1 flex-col bg-[#f6f8fc] font-['Inter',sans-serif]">
        <GmailHeader />
        <div className="flex min-h-0 flex-1">
          <Sidebar />
          <div className="flex min-w-0 flex-1 pb-[15px]">
            <InboxPanel />
          </div>
        </div>
        <div className="absolute bottom-0 left-0 h-[22px] w-1/3 rounded-tr border-t border-r border-[#c5d3ea] bg-[#d3e3fd] pl-[5px] font-['Noto_Sans'] text-[11px]/5 text-[#474747]">
          Waiting for ssl.gstatic.com...
        </div>
        <div className="absolute right-[88px] bottom-[49px] font-['Noto_Sans'] text-[#bdbdbd]">
          <p className="text-[19px]/6">Activate Windows</p>
          <p className="text-[14px]/5">Go to Settings to activate Windows.</p>
        </div>
      </div>
      <Taskbar />
    </div>
  )
}

export default App
